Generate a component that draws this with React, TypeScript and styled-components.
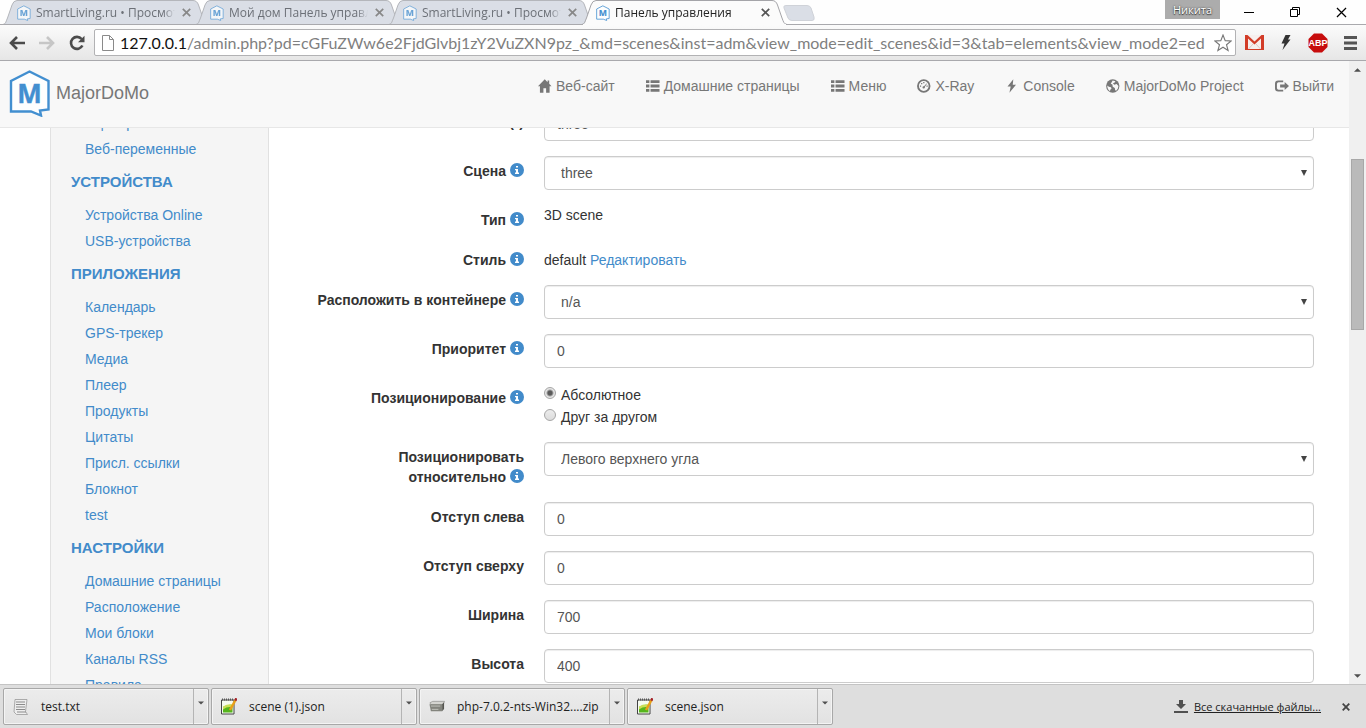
import React, { useState } from "react";
import styled, { createGlobalStyle } from "styled-components";

const uiFont = `"Open Sans", "Noto Sans", sans-serif`;
const pageFont = `"Liberation Sans", Arial, sans-serif`;

const GlobalStyle = createGlobalStyle`
  *, *::before, *::after { box-sizing: border-box; }
  body { margin: 0; background: #fff; font-family: ${pageFont}; font-size: 14px; line-height: 20px; color: #333; }
  button, input, select { font: inherit; color: inherit; margin: 0; }
  svg { display: block; flex: none; }
`;

/* ---------- browser window ---------- */

const Window = styled.div`
  display: flex;
  flex-direction: column;
  height: 100vh;
  overflow: hidden;
`;

const PlainButton = styled.button`
  display: flex;
  align-items: center;
  justify-content: center;
  flex: none;
  padding: 0;
  border: 0;
  background: none;
`;

const TabStrip = styled.header`
  display: flex;
  align-items: flex-start;
  height: 25px;
  flex: none;
  padding-left: 3px;
  background: #fefefe;
  border-bottom: 1px solid #a9a9ad;
  font-family: ${uiFont};
`;

const Tab = styled.div<{ $active?: boolean }>`
  position: relative;
  z-index: ${(p) => (p.$active ? 2 : 1)};
  display: flex;
  align-items: center;
  width: 205px;
  height: 25px;
  flex: none;
  margin-right: -12px;
  padding: 0 14px;
  font-size: 12px;
  color: ${(p) => (p.$active ? "#222" : "#6c7077")};
  > svg { opacity: ${(p) => (p.$active ? 1 : 0.75)}; }
`;

const TabShape = styled.svg`
  position: absolute;
  inset: 0;
  z-index: -1;
  width: 100%;
  height: 100%;
  && { opacity: 1; }
`;

const TabTitle = styled.span`
  flex: 1;
  min-width: 0;
  margin-left: 5px;
  overflow: hidden;
  white-space: nowrap;
  mask-image: linear-gradient(90deg, #000 92%, transparent);
`;

const TabClose = styled(PlainButton)`
  width: 16px;
  height: 16px;
  margin-left: 3px;
`;

const NewTab = styled(PlainButton)`
  margin: 5px 0 0 8px;
`;

const WindowControls = styled.div`
  display: flex;
  margin-left: auto;
  padding-right: 2px;
`;

const UserBadge = styled.button`
  width: 55px;
  height: 19px;
  margin-right: 6px;
  padding: 0;
  border: 0;
  background: #acacac;
  color: #fff;
  font-size: 11px;
  line-height: 18px;
  text-shadow: 0 0 2px #333, 0 1px 1px #444;
`;

const WindowButton = styled(PlainButton)`
  width: 46px;
  height: 24px;
`;

const Toolbar = styled.div`
  display: flex;
  align-items: center;
  height: 36px;
  flex: none;
  padding-left: 2px;
  background: linear-gradient(#fbfbfb, #e6e6e6);
  border-bottom: 1px solid #a9a9ad;
`;

const ToolButton = styled(PlainButton)`
  width: 30px;
  height: 28px;
`;

const Extension = styled(PlainButton)`
  width: 32px;
  height: 28px;
`;

const AddressBar = styled.label`
  display: flex;
  align-items: center;
  flex: 1;
  min-width: 0;
  height: 27px;
  margin: 0 2px 0 2px;
  padding: 0 3px 0 7px;
  background: #fff;
  border: 1px solid #b2b2b4;
  border-radius: 2px;
  font-family: Lato, ${uiFont};
  font-size: 16px;
  line-height: 24px;
`;

const Host = styled.span`
  margin-left: 6px;
  color: #111;
`;

const Url = styled.input`
  flex: 1;
  min-width: 0;
  height: 24px;
  padding: 0;
  border: 0;
  outline: 0;
  background: none;
  color: #808080;
`;

const Viewport = styled.div`
  display: flex;
  flex: 1;
  min-height: 0;
`;

const Scrollbar = styled.div`
  display: flex;
  flex-direction: column;
  width: 17px;
  flex: none;
  padding: 0 2px;
  background: #f0f0f0;
`;

const ScrollArrow = styled(PlainButton)`
  height: 17px;
`;

const ScrollGap = styled.div<{ $share: number }>`
  flex: ${(p) => p.$share} 0 0;
`;

const ScrollThumb = styled.div`
  flex: 170 0 0;
  background: #bababa;
  border: 1px solid #a8a8a8;
`;

/* ---------- page ---------- */

const Page = styled.div`
  display: flex;
  flex-direction: column;
  flex: 1;
  min-width: 0;
  overflow: hidden;
`;

const Navbar = styled.nav`
  display: flex;
  align-items: flex-start;
  justify-content: space-between;
  height: 67px;
  flex: none;
  padding: 0 15px 0 9px;
  background: #f8f8f8;
  border-bottom: 1px solid #e7e7e7;
`;

const Brand = styled.a`
  display: flex;
  align-items: center;
  gap: 5px;
  padding-top: 8px;
  color: #777;
  font-size: 18px;
  text-decoration: none;
`;

const NavLinks = styled.div`
  display: flex;
  gap: 31px;
  padding-top: 15px;
`;

const NavLink = styled.a`
  display: flex;
  align-items: center;
  gap: 4px;
  color: #777;
  text-decoration: none;
`;

const Columns = styled.div`
  display: flex;
  flex: 1;
  min-height: 0;
  overflow: hidden;
`;

const Sidebar = styled.aside`
  width: 219px;
  flex: none;
  align-self: flex-start;
  margin: -18px 0 0 50px;
  padding: 0 20px;
  background: #f5f5f5;
  border: 1px solid #e1e1e1;
  border-width: 0 1px;
`;

const SideHeading = styled.h2`
  margin: 0;
  padding: 10px 0;
  font-size: 15px;
  line-height: 20px;
  font-weight: bold;
  color: #428bca;
`;

const SideList = styled.ul`
  margin: 0;
  padding: 0 0 0 14px;
  list-style: none;
`;

const Link = styled.a`
  color: #428bca;
  text-decoration: none;
`;

const SideItem = styled.li`
  line-height: 26px;
`;

const Form = styled.form`
  display: flex;
  flex-direction: column;
  gap: 15px;
  flex: 1;
  min-width: 0;
  align-self: flex-start;
  margin-top: -21px;
  padding: 0 35px 0 39px;
`;

const Row = styled.div`
  display: flex;
  align-items: flex-start;
  gap: 20px;
`;

const RowLabel = styled.div`
  width: 216px;
  flex: none;
  padding-top: 5px;
  font-weight: bold;
  text-align: right;
`;

const InfoLink = styled.a`
  display: inline-block;
  margin-left: 4px;
  vertical-align: -1px;
`;

const Field = styled.div`
  position: relative;
  flex: 1;
  min-width: 0;
`;

const TextValue = styled.div<{ $padded?: boolean }>`
  flex: 1;
  padding-top: ${(p) => (p.$padded ? 5 : 0)}px;
`;

const TextInput = styled.input`
  display: block;
  width: 100%;
  height: 34px;
  padding: 6px 12px;
  color: #555;
  background: #fff;
  border: 1px solid #ccc;
  border-radius: 4px;
  box-shadow: inset 0 1px 1px rgba(0, 0, 0, 0.075);
`;

const Select = styled.select`
  display: block;
  width: 100%;
  height: 34px;
  padding: 6px 16px;
  appearance: none;
  color: #555;
  background: #fff;
  border: 1px solid #ccc;
  border-radius: 4px;
  box-shadow: inset 0 1px 1px rgba(0, 0, 0, 0.075);
`;

const SelectArrow = styled.svg`
  position: absolute;
  right: 7px;
  top: 14px;
  pointer-events: none;
`;

const RadioList = styled.div`
  display: flex;
  flex-direction: column;
  flex: 1;
`;

const RadioLabel = styled.label`
  display: flex;
  align-items: flex-start;
  gap: 5px;
  line-height: 25px;
  height: 22px;
`;

const Radio = styled.input`
  appearance: none;
  width: 12px;
  height: 12px;
  margin-top: 4px;
  border: 1px solid #a6a6a6;
  border-radius: 50%;
  background: linear-gradient(#ececec, #dcdcdc);
  &:checked { background: radial-gradient(circle, #5a5a5a 0 2px, #e6e6e6 4px); }
`;

/* ---------- downloads ---------- */

const DownloadBar = styled.footer`
  display: flex;
  align-items: center;
  gap: 2px;
  height: 44px;
  flex: none;
  padding: 0 12px 0 3px;
  background: #dedede;
  border-top: 1px solid #c4c4c4;
  font-family: ${uiFont};
  font-size: 12px;
  color: #222;
`;

const Download = styled.div`
  display: flex;
  width: 206px;
  height: 37px;
  background: linear-gradient(#ececec, #e2e2e2);
  border: 1px solid #a8a8a8;
  border-radius: 2px;
  box-shadow: inset 0 0 0 1px #f4f4f4;
`;

const DownloadOpen = styled(PlainButton)`
  flex: 1;
  min-width: 0;
  justify-content: flex-start;
  gap: 12px;
  padding-left: 9px;
  white-space: nowrap;
`;

const DownloadMenu = styled(PlainButton)`
  width: 15px;
  padding-bottom: 8px;
  border-left: 1px solid #b4b4b4;
`;

const AllDownloads = styled.a`
  display: flex;
  align-items: center;
  gap: 6px;
  margin-left: auto;
  color: #222;
  font-size: 11px;
`;

const CloseBar = styled(PlainButton)`
  width: 16px;
  height: 16px;
  margin-left: 15px;
`;

/* ---------- drawings ---------- */

const Logo = ({ width = 42, height = 48 }: { width?: number; height?: number }) => (
  <svg width={width} height={height} viewBox="0 0 42 48" aria-hidden>
    <path d="M20.500 2.500 39.500 12V40.500L31 41.500 32 46.500 22 42.500 2 42.500V12Z" fill="#fdfefe" stroke="#428fd0" strokeWidth="2.400" />
    <text x="20.500" y="34" textAnchor="middle" fontFamily="Open Sans" fontWeight="700" fontSize="26" fill="#428fd0" stroke="#428fd0" strokeWidth=".4">M</text>
  </svg>
);

const Cross = ({ size = 8, color = "#777", weight = 2 }: { size?: number; color?: string; weight?: number }) => (
  <svg width={size} height={size} viewBox="0 0 8 8" aria-hidden>
    <path d="M.7.7l6.600 6.600M7.300.7.7 7.300" stroke={color} strokeWidth={weight} />
  </svg>
);

const Triangle = ({ up, w = 7 }: { up?: boolean; w?: number }) => (
  <svg width={w} height="4" viewBox="0 0 8 4" aria-hidden>
    <path d={up ? "M0 4 4 0 8 4Z" : "M0 0H8L4 4Z"} fill="#505050" />
  </svg>
);

const InfoIcon = () => (
  <svg width="14" height="14" viewBox="0 0 14 14" aria-hidden>
    <circle cx="7" cy="7" r="7" fill="#428bca" />
    <path d="M6 3h2v1.500H6zM5 6h3v3.500h1V11H5V9.500h1V7.200H5z" fill="#fff" />
  </svg>
);

const glyphs: Record<string, React.ReactNode> = {
  home: <path d="M7 0 0 7.200h2V14h3.600V9.300h2.800V14H12V7.200h2L11.600 4.700V1.200H9.900V3z" fill="#777" />,
  list: <path d="M0 1h3.500v3H0zM4.700 1H14v3H4.700zM0 5.500h3.500v3H0zM4.700 5.500H14v3H4.700zM0 10h3.500v3H0zM4.700 10H14v3H4.700z" fill="#777" />,
  dash: (
    <g fill="#777">
      <circle cx="7" cy="7" r="6" fill="none" stroke="#777" strokeWidth="1.900" />
      <path d="M6.200 8.600 9.800 4.300l.5.400-3 4.300zM3 6.500h1.300v1.300H3zM4.200 3.900h1.300v1.300H4.200zM6.400 2.900h1.300v1.300H6.400zM9.800 6.500h1.300v1.300H9.800z" />
      <circle cx="6.900" cy="8.500" r="1.200" />
    </g>
  ),
  flash: <path d="M8.600 0 2.600 7.600h3.300L4.600 14l6.800-8.300H8z" fill="#777" />,
  globe: (
    <g>
      <circle cx="7" cy="7" r="6.900" fill="#777" />
      <path d="M6.900 1.300 9.800 2 9 3.400 7.200 4.200 8.500 5.600 11 5l1.900 2-.7 2.800-1.700 2-1-.3-.4-2.500L7 7.700 6.600 5.500 4.900 4.600zM1.300 6.600 3 7.800l2.200.6.500 1.500-1.300 1-.2 1.600C2.500 11.400 1.200 9.300 1.300 6.600z" fill="#f8f8f8" />
    </g>
  ),
  logout: (
    <g fill="#777">
      <path d="M8.500 1.200H3.400A3.400 3.400 0 0 0 0 4.600v4.800a3.400 3.400 0 0 0 3.400 3.400h5.100v-2H3.700A1.700 1.700 0 0 1 2 9.100V4.900a1.700 1.700 0 0 1 1.700-1.700h4.800z" />
      <path d="M10 2.900 14.500 7 10 11.100V8.500H5.300v-3H10z" />
    </g>
  ),
};

const Glyph = ({ name }: { name: string }) => (
  <svg width="14" height="14" viewBox="0 0 14.500 14" aria-hidden>{glyphs[name]}</svg>
);

const fileIcons: Record<string, React.ReactNode> = {
  txt: (
    <svg width="16" height="16" viewBox="0 0 16 16" aria-hidden>
      <path d="M2 .5h12L12.500 12.500l2 3H3.500L1 13z" fill="#eee" stroke="#999" strokeWidth=".8" />
      <path d="M3 3h9M3 5.500h9M3 8h9M3 10.500h9M4 13h9" stroke="#8b8b8b" />
    </svg>
  ),
  json: (
    <svg width="16" height="17" viewBox="0 0 16 17" aria-hidden>
      <path d="M.5 2h12.500v14H.5z" fill="#f6fbf0" stroke="#444" />
      <path d="M2 9q5-3 9.500-2v7.500H2z" fill="#55b51c" />
      <path d="M2 8.500q5-3 9.500-2v3Q7 8 2 11.500z" fill="#c8df55" />
      <path d="M1 1.500h11" stroke="#555" strokeDasharray="1 1" strokeWidth="2" />
      <path d="M14.500 2 9 12" stroke="#e8a018" strokeWidth="2.500" />
      <path d="M15.500.3 14.200 2.700" stroke="#a4242a" strokeWidth="2.500" />
    </svg>
  ),
  zip: (
    <svg width="16" height="16" viewBox="0 0 17 16" aria-hidden>
      <path d="M1 3.500 4 2h12.500L15 5.500H2z" fill="#d4d4d0" stroke="#8d8d89" strokeWidth=".7" />
      <path d="M.5 5h13.500v7.500H2z" fill="#83847d" />
      <path d="M14 5 16 3v7l-2 2.500z" fill="#555650" />
      <path d="M2 7h10M3 10.500h7" stroke="#c4c5be" />
    </svg>
  ),
};

/* ---------- data ---------- */

const tabs = [
  { title: "SmartLiving.ru • Просмотр" },
  { title: "Мой дом Панель управления" },
  { title: "SmartLiving.ru • Просмотр" },
  { title: "Панель управления", active: true },
];

const navItems = [
  ["home", "Веб-сайт"],
  ["list", "Домашние страницы"],
  ["list", "Меню"],
  ["dash", "X-Ray"],
  ["flash", "Console"],
  ["globe", "MajorDoMo Project"],
  ["logout", "Выйти"],
];

const sections = [
  { title: "", items: ["Сценарии", "Веб-переменные"] },
  { title: "УСТРОЙСТВА", items: ["Устройства Online", "USB-устройства"] },
  {
    title: "ПРИЛОЖЕНИЯ",
    items: ["Календарь", "GPS-трекер", "Медиа", "Плеер", "Продукты", "Цитаты", "Присл. ссылки", "Блокнот", "test"],
  },
  { title: "НАСТРОЙКИ", items: ["Домашние страницы", "Расположение", "Мои блоки", "Каналы RSS", "Правила"] },
];

const downloads = [
  ["txt", "test.txt"],
  ["json", "scene (1).json"],
  ["zip", "php-7.0.2-nts-Win32....zip"],
  ["json", "scene.json"],
];

/* ---------- parts ---------- */

const Info = () => (
  <InfoLink href="#" aria-label="Справка"><InfoIcon /></InfoLink>
);

const InputRow = ({ id, label, value, info }: { id: string; label: string; value: string; info?: boolean }) => (
  <Row>
    <RowLabel><label htmlFor={id}>{label}</label>{info && <Info />}</RowLabel>
    <Field><TextInput id={id} defaultValue={value} /></Field>
  </Row>
);

const SelectRow = ({ id, label, value }: { id: string; label: string; value: string }) => (
  <Row>
    <RowLabel><label htmlFor={id}>{label}</label><Info /></RowLabel>
    <Field>
      <Select id={id} defaultValue={value}><option>{value}</option></Select>
      <SelectArrow width="6" height="6" viewBox="0 0 6 6" aria-hidden><path d="M0 0h6L3 6z" fill="#444" /></SelectArrow>
    </Field>
  </Row>
);

export default function App() {
  const [placing, setPlacing] = useState("abs");
  return (
    <Window>
      <GlobalStyle />
      <TabStrip>
        {tabs.map((tab, i) => (
          <Tab key={i} $active={tab.active}>
            <TabShape viewBox="0 0 205 25" preserveAspectRatio="none" aria-hidden>
              <path
                d="M0 24.500C3 24 3 21 4.500 18L9 5Q10.500.5 14 .5H190Q194 .5 195.500 5L200 18C201.500 22 202 24 205 24.500"
                fill={tab.active ? "#fbfbfb" : "#dadee6"}
                stroke={tab.active ? "#a4a4a8" : "#b4b6bb"}
              />
              {tab.active ? <path d="M1 24.500H204" stroke="#fbfbfb" /> : <path d="M0 24.500H205" stroke="#a9a9ad" />}
            </TabShape>
            <Logo width={14} height={16} />
            <TabTitle>{tab.title}</TabTitle>
            <TabClose aria-label="Закрыть вкладку"><Cross color={tab.active ? "#555" : "#888"} weight={1.5} size={9} /></TabClose>
          </Tab>
        ))}
        <NewTab aria-label="Новая вкладка">
          <svg width="32" height="16" viewBox="0 0 32 16" aria-hidden>
            <path d="M3 .5H24Q27 .5 28 3L31 12Q32 15.500 29 15.500H9Q6 15.500 5 13L1 3Q0 .5 3 .5Z" fill="#dadee6" stroke="#cfd2d8" />
          </svg>
        </NewTab>
        <WindowControls>
          <UserBadge>Никита</UserBadge>
          <WindowButton aria-label="Свернуть">
            <svg width="10" height="10" viewBox="0 0 10 10"><path d="M0 5.500h10" stroke="#000" /></svg>
          </WindowButton>
          <WindowButton aria-label="Восстановить">
            <svg width="10" height="10" viewBox="0 0 10 10"><path d="M.5 2.500h7v7h-7zM2.500 2.500v-2h7v7h-2" fill="none" stroke="#000" /></svg>
          </WindowButton>
          <WindowButton aria-label="Закрыть"><Cross size={11} color="#000" weight={0.9} /></WindowButton>
        </WindowControls>
      </TabStrip>

      <Toolbar>
        <ToolButton aria-label="Назад">
          <svg width="16" height="14" viewBox="0 0 16 14"><path d="M8 1 2 7l6 6M2 7h14" fill="none" stroke="#4b4b4b" strokeWidth="2.600" /></svg>
        </ToolButton>
        <ToolButton aria-label="Вперёд">
          <svg width="16" height="14" viewBox="0 0 16 14"><path d="M8 1l6 6-6 6M14 7H0" fill="none" stroke="#c6c6c6" strokeWidth="2.600" /></svg>
        </ToolButton>
        <ToolButton aria-label="Обновить">
          <svg width="16" height="16" viewBox="0 0 16 16">
            <path d="M12.600 4A6 6 0 1 0 13.400 10.500" fill="none" stroke="#4b4b4b" strokeWidth="2.600" />
            <path d="M15.500.8V7.200H9z" fill="#4b4b4b" />
          </svg>
        </ToolButton>
        <AddressBar>
          <svg width="12" height="16" viewBox="0 0 12 16" aria-hidden>
            <path d="M.5.5h7l4 4v11H.5zM7.500.5v4h4" fill="#fff" stroke="#8a8a8a" />
          </svg>
          <Host>127.0.0.1</Host>
          <Url
            aria-label="Адрес"
            defaultValue="/admin.php?pd=cGFuZWw6e2FjdGlvbj1zY2VuZXN9pz_&md=scenes&inst=adm&view_mode=edit_scenes&id=3&tab=elements&view_mode2=ed"
          />
          <svg width="18" height="18" viewBox="0 0 18 18" aria-hidden>
            <path d="M9 1l2.200 5.600 6 .3-4.700 3.800 1.600 5.800L9 13.200l-5.100 3.300 1.600-5.800L.8 6.900l6-.3z" fill="#fff" stroke="#777" strokeWidth="1.100" />
          </svg>
        </AddressBar>
        <Extension aria-label="Gmail">
          <svg width="19" height="15" viewBox="0 0 19 15">
            <path d="M0 0h19v15H0z" fill="#d23c28" />
            <path d="M3 3.500 9.500 9.500 16 3.500V14H3z" fill="#f6efee" />
            <path d="M2.500 0H16.500L9.500 6.500z" fill="#f6efee" />
            <path d="M3.500 14 8 9M15.500 14 11 9" stroke="#dccaca" />
          </svg>
        </Extension>
        <Extension aria-label="Молния">
          <svg width="10" height="15" viewBox="0 0 10 15"><path d="M4.500 0H9.500L7 4.500H9.500L1.500 15 3.500 8.500H.5z" fill="#333" /></svg>
        </Extension>
        <Extension aria-label="Adblock Plus">
          <svg width="20" height="20" viewBox="0 0 20 20">
            <path d="M6 .5h8L19.500 6v8L14 19.500H6L.5 14V6z" fill="#c70d0d" />
            <text x="10" y="13" textAnchor="middle" fontFamily="Liberation Sans Narrow, Liberation Sans" fontWeight="700" fontSize="9" fill="#fff">ABP</text>
          </svg>
        </Extension>
        <Extension aria-label="Меню Chrome">
          <svg width="13" height="14" viewBox="0 0 13 14"><path d="M0 1.500h13M0 7h13M0 12.500h13" stroke="#555" strokeWidth="2.800" /></svg>
        </Extension>
      </Toolbar>

      <Viewport>
        <Page>
          <Navbar>
            <Brand href="#"><Logo /><span>MajorDoMo</span></Brand>
            <NavLinks>
              {navItems.map(([icon, text]) => (
                <NavLink href="#" key={text}><Glyph name={icon} />{text}</NavLink>
              ))}
            </NavLinks>
          </Navbar>
          <Columns>
            <Sidebar>
              {sections.map((section) => (
                <React.Fragment key={section.title}>
                  {section.title && <SideHeading>{section.title}</SideHeading>}
                  <SideList>
                    {section.items.map((item) => (
                      <SideItem key={item}><Link href="#">{item}</Link></SideItem>
                    ))}
                  </SideList>
                </React.Fragment>
              ))}
            </Sidebar>
            <Form>
              <InputRow id="title" label="Название (*)" value="three" />
              <SelectRow id="scene" label="Сцена" value="three" />
              <Row>
                <RowLabel>Тип<Info /></RowLabel>
                <TextValue>3D scene</TextValue>
              </Row>
              <Row>
                <RowLabel>Стиль<Info /></RowLabel>
                <TextValue $padded>default <Link href="#">Редактировать</Link></TextValue>
              </Row>
              <SelectRow id="container" label="Расположить в контейнере" value="n/a" />
              <InputRow id="priority" label="Приоритет" value="0" info />
              <Row>
                <RowLabel id="placing">Позиционирование<Info /></RowLabel>
                <RadioList role="radiogroup" aria-labelledby="placing">
                  <RadioLabel>
                    <Radio type="radio" name="placing" checked={placing === "abs"} onChange={() => setPlacing("abs")} />
                    Абсолютное
                  </RadioLabel>
                  <RadioLabel>
                    <Radio type="radio" name="placing" checked={placing === "flow"} onChange={() => setPlacing("flow")} />
                    Друг за другом
                  </RadioLabel>
                </RadioList>
              </Row>
              <SelectRow id="anchor" label="Позиционировать относительно" value="Левого верхнего угла" />
              <InputRow id="left" label="Отступ слева" value="0" />
              <InputRow id="top" label="Отступ сверху" value="0" />
              <InputRow id="width" label="Ширина" value="700" />
              <InputRow id="height" label="Высота" value="400" />
            </Form>
          </Columns>
        </Page>
        <Scrollbar>
          <ScrollArrow aria-label="Вверх"><Triangle up /></ScrollArrow>
          <ScrollGap $share={81} />
          <ScrollThumb />
          <ScrollGap $share={338} />
          <ScrollArrow aria-label="Вниз"><Triangle /></ScrollArrow>
        </Scrollbar>
      </Viewport>

      <DownloadBar>
        {downloads.map(([type, name]) => (
          <Download key={name}>
            <DownloadOpen>{fileIcons[type]}{name}</DownloadOpen>
            <DownloadMenu aria-label="Действия"><Triangle w={6} /></DownloadMenu>
          </Download>
        ))}
        <AllDownloads href="#">
          <svg width="14" height="13" viewBox="0 0 14 13" aria-hidden>
            <path d="M5 0h4v4h3L7 9 2 4h3zM0 11h14v2H0z" fill="#505050" />
          </svg>
          Все скачанные файлы...
        </AllDownloads>
        <CloseBar aria-label="Закрыть"><Cross size={8} color="#444" weight={1.8} /></CloseBar>
      </DownloadBar>
    </Window>
  );
}
